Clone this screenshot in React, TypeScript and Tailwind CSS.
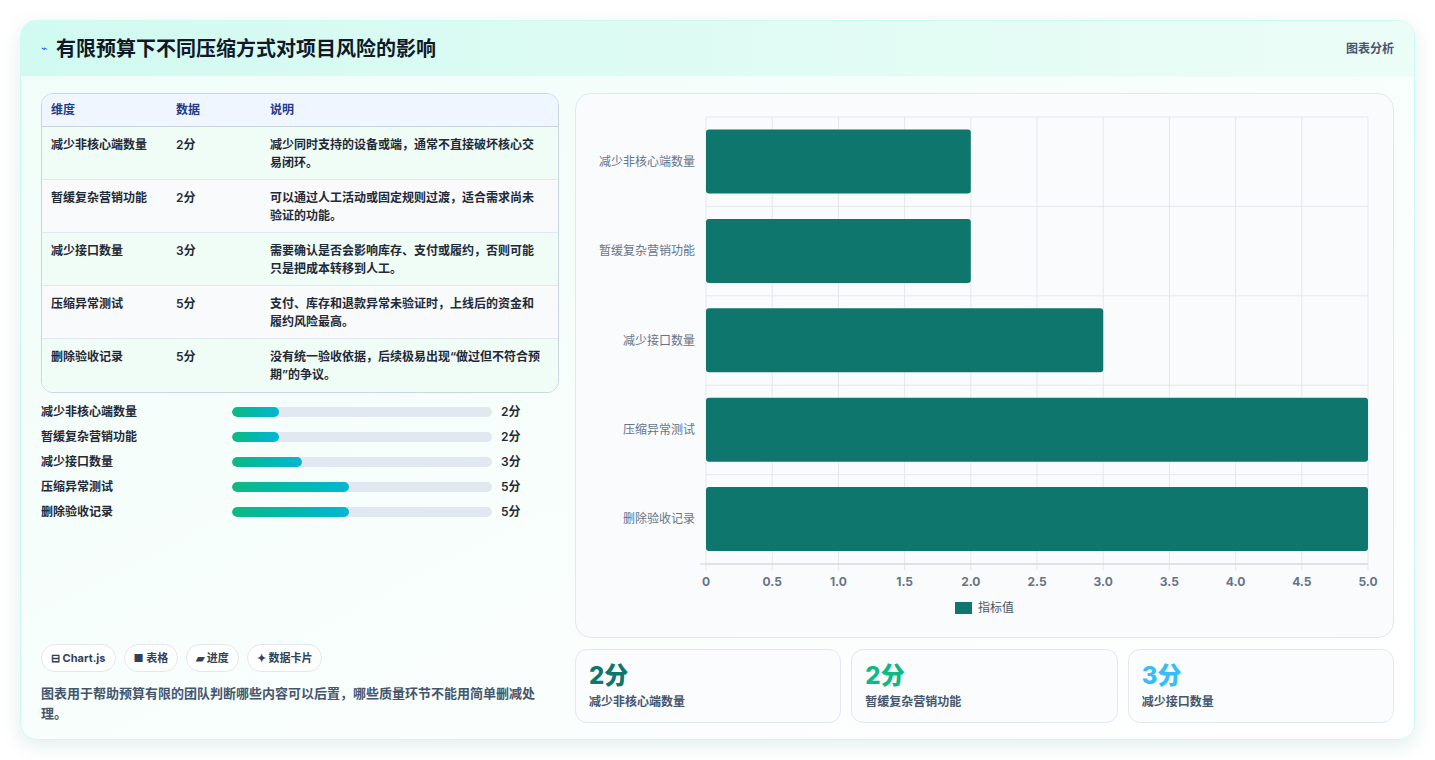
import React from "react";

const rows = [
  { n: "减少非核心端数量", v: 2, d: "减少同时支持的设备或端，通常不直接破坏核心交易闭环。" },
  { n: "暂缓复杂营销功能", v: 2, d: "可以通过人工活动或固定规则过渡，适合需求尚未验证的功能。" },
  { n: "减少接口数量", v: 3, d: "需要确认是否会影响库存、支付或履约，否则可能只是把成本转移到人工。" },
  { n: "压缩异常测试", v: 5, d: "支付、库存和退款异常未验证时，上线后的资金和履约风险最高。" },
  { n: "删除验收记录", v: 5, d: "没有统一验收依据，后续极易出现“做过但不符合预期”的争议。" },
];

function Chart() {
  const W = 817, H = 543;
  const x0 = 130, x1 = 792, y0 = 23, y1 = 470;
  const rh = (y1 - y0) / 5;
  const sx = (x1 - x0) / 5;
  const ticks = [0, 0.5, 1, 1.5, 2, 2.5, 3, 3.5, 4, 4.5, 5];
  return (
    <svg width={W} height={H} className="block">
      {ticks.map((t) => (
        <line key={t} x1={x0 + t * sx} x2={x0 + t * sx} y1={y0} y2={y1 + 6} stroke="#e5e7eb" />
      ))}
      {[0, 1, 2, 3, 4, 5].map((i) => (
        <line key={i} x1={x0} x2={x1} y1={y0 + i * rh} y2={y0 + i * rh} stroke="#e5e7eb" />
      ))}
      <line x1={x0 - 6} x2={x1} y1={y1} y2={y1} stroke="#cbd5e1" />
      {rows.map((r, i) => (
        <g key={i}>
          <rect x={x0} y={y0 + i * rh + 12.5} width={r.v * sx} height={64} rx={3} fill="#0f766e" />
          <text x={x0 - 11} y={y0 + i * rh + rh / 2 + 4} textAnchor="end" fontSize="12" fill="#64748b">{r.n}</text>
        </g>
      ))}
      {ticks.map((t) => (
        <text key={t} x={x0 + t * sx} y={y1 + 22} textAnchor="middle" fontSize="12" fontWeight="bold" fill="#64748b">{t === 0 ? "0" : t.toFixed(1)}</text>
      ))}
      <rect x={379} y={508} width={17} height={12} fill="#0f766e" />
      <text x={402} y={518} fontSize="12" fill="#4b5563">指标值</text>
    </svg>
  );
}

export default function App() {
  return (
    <div className="w-[1435px] h-[760px] bg-white p-5 text-slate-800" style={{ fontFamily: "Inter, 'Noto Sans CJK SC', sans-serif" }}>
      <div className="w-[1395px] h-[720px] rounded-2xl border border-teal-100 shadow-[0_6px_20px_rgba(15,118,110,0.12)] overflow-hidden bg-gradient-to-br from-[#f0fdf9] to-white flex flex-col">
        <div className="h-[56px] shrink-0 flex items-center justify-between px-5 bg-gradient-to-r from-[#d1faf0] to-[#ecfdf7] border-b border-teal-50">
          <div className="flex items-center gap-2">
            <span className="text-blue-600 text-[11px]">⌁</span>
            <span className="text-[20px] font-bold text-[#111827]">有限预算下不同压缩方式对项目风险的影响</span>
          </div>
          <span className="text-[12px] font-semibold text-slate-600">图表分析</span>
        </div>
        <div className="flex-1 flex gap-4 px-5 pt-4 pb-5">
          <div className="w-[522px] flex flex-col">
            <div className="rounded-xl border border-slate-300 overflow-hidden text-[12px]">
              <div className="flex h-[33px] items-center bg-[#eff6ff] border-b border-slate-300 font-semibold text-[#1e3a8a]">
                <div className="w-[134px] pl-[9px]">维度</div>
                <div className="w-[94px]">数据</div>
                <div className="flex-1">说明</div>
              </div>
              {rows.map((r, i) => (
                <div key={i} className={`flex h-[53px] items-start pt-[9px] text-[#1f2937] ${i < 4 ? "border-b border-slate-200" : ""} ${i % 2 === 0 ? "bg-[#f0fdf6]" : "bg-[#f8fafc]"}`}>
                  <div className="w-[134px] pl-[9px] font-semibold">{r.n}</div>
                  <div className="w-[94px] font-semibold">{r.v}分</div>
                  <div className="flex-1 pr-4 leading-[18px] font-semibold">{r.d}</div>
                </div>
              ))}
            </div>
            <div className="mt-[11px] flex flex-col gap-[9px]">
              {rows.map((r, i) => (
                <div key={i} className="flex items-center h-[16px] text-[12px] font-semibold">
                  <div className="w-[191px] text-[#1f2937]">{r.n}</div>
                  <div className="w-[260px] h-[10px] rounded-full bg-[#e2e8f0] overflow-hidden">
                    <div className="h-full rounded-full bg-gradient-to-r from-[#10b981] to-[#06b6d4]" style={{ width: `${r.v * 9}%` }} />
                  </div>
                  <div className="ml-[9px] text-[#1f2937]">{r.v}分</div>
                </div>
              ))}
            </div>
            <div className="flex-1" />
            <div className="flex gap-2 text-[11px] font-bold text-slate-700">
              <span className="h-[28px] px-[9px] rounded-full border border-slate-200 bg-white flex items-center">⊟ Chart.js</span>
              <span className="h-[28px] px-[9px] rounded-full border border-slate-200 bg-white flex items-center">■ 表格</span>
              <span className="h-[28px] px-[9px] rounded-full border border-slate-200 bg-white flex items-center">▰ 进度</span>
              <span className="h-[28px] px-[9px] rounded-full border border-slate-200 bg-white flex items-center">✦ 数据卡片</span>
            </div>
            <p className="mt-[12px] text-[13px] text-slate-600 font-semibold">图表用于帮助预算有限的团队判断哪些内容可以后置，哪些质量环节不能用简单删减处理。</p>
          </div>
          <div className="flex-1 flex flex-col gap-[11px]">
            <div className="h-[545px] rounded-2xl border border-slate-200 bg-[#f9fbfd]">
              <Chart />
            </div>
            <div className="flex gap-[10px]">
              {[
                { v: "2分", n: "减少非核心端数量", c: "text-[#0f766e]" },
                { v: "2分", n: "暂缓复杂营销功能", c: "text-[#10b981]" },
                { v: "3分", n: "减少接口数量", c: "text-[#38bdf8]" },
              ].map((s, i) => (
                <div key={i} className="flex-1 h-[74px] rounded-xl border border-slate-200 bg-[#fafcfd] px-[13px] pt-[11px]">
                  <div className={`text-[24px] font-extrabold leading-[30px] ${s.c}`}>{s.v}</div>
                  <div className="text-[12px] font-semibold text-slate-600 mt-[2px]">{s.n}</div>
                </div>
              ))}
            </div>
          </div>
        </div>
      </div>
    </div>
  );
}
